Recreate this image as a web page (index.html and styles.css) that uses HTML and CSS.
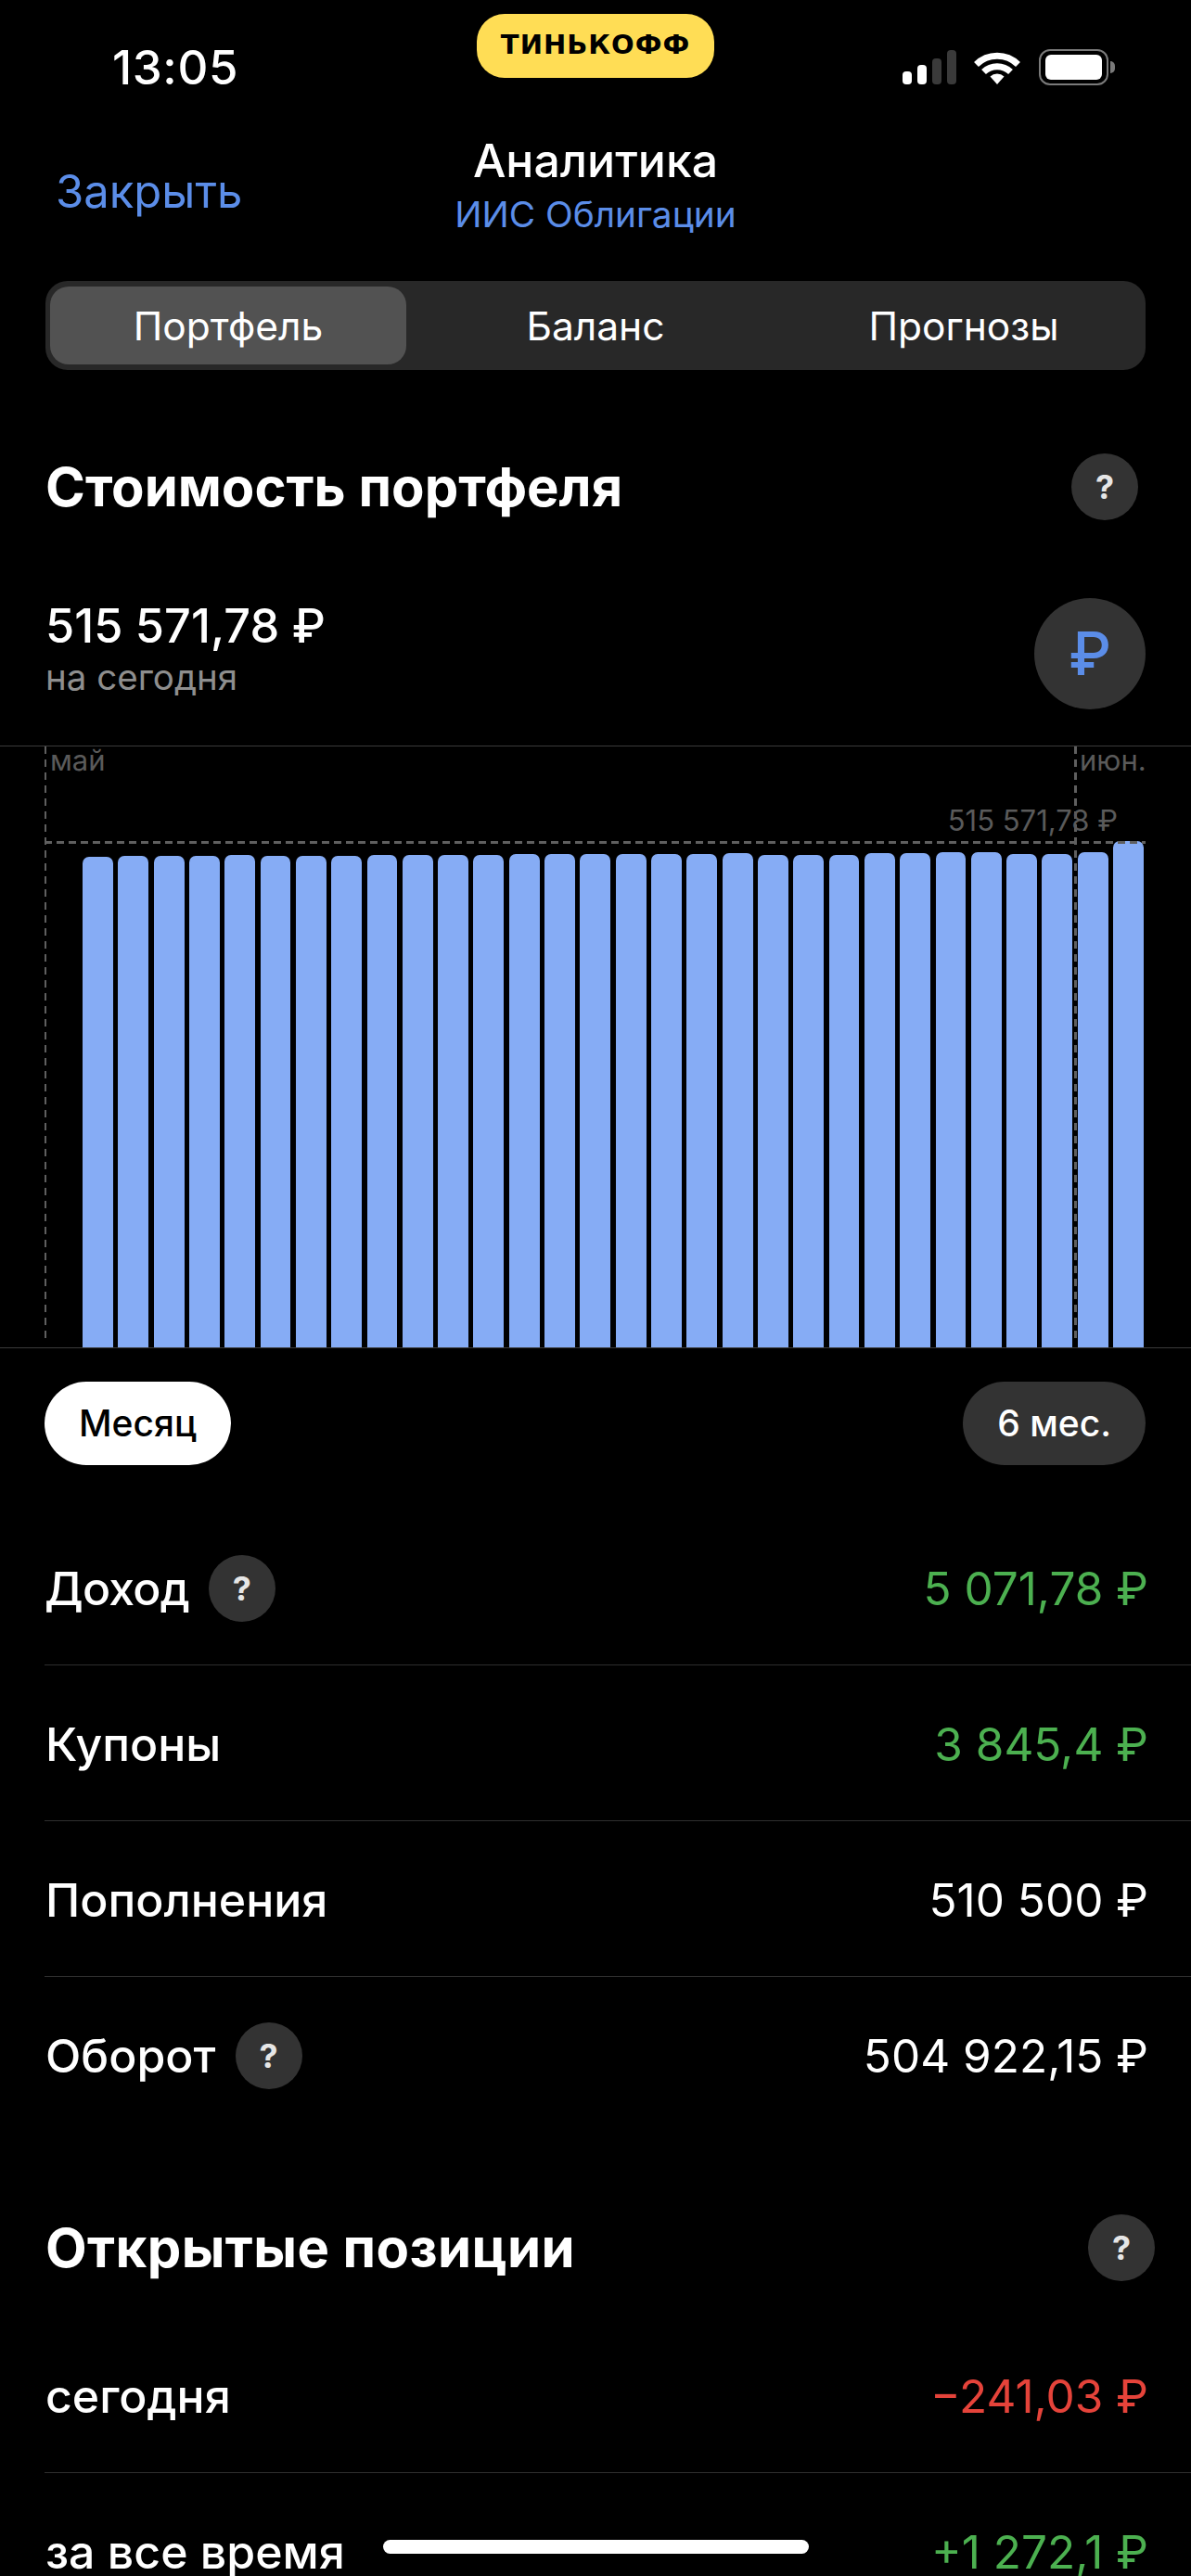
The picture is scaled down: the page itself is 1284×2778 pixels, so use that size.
FILE: index.html
```html
<!DOCTYPE html>
<html lang="ru">
<head>
  <meta charset="UTF-8">
  <title>Аналитика</title>
  <link rel="stylesheet" href="styles.css">
</head>
<body>
  <div class="status">
    <div class="time">13:05</div>
    <div class="brand">ТИНЬКОФФ</div>
    <div class="status-icons">
      <svg class="signal" width="58" height="37" viewBox="0 0 58 37">
        <rect x="0" y="23" width="10" height="14" rx="4" fill="#fff"/>
        <rect x="16" y="16" width="10" height="21" rx="4" fill="#fff"/>
        <rect x="32" y="9" width="10" height="28" rx="4" fill="#3a3a3a"/>
        <rect x="48" y="0" width="10" height="37" rx="4" fill="#3a3a3a"/>
      </svg>
      <svg class="wifi" width="50" height="37" viewBox="0 0 50 37">
        <path d="M2.5 15.5A32 32 0 0 1 47.500 15.500" fill="none" stroke="#fff" stroke-width="7"/>
        <path d="M10.500 23.500A21 21 0 0 1 39.500 23.500" fill="none" stroke="#fff" stroke-width="7"/>
        <path d="M25 37L17.500 28.500A11 11 0 0 1 32.500 28.500Z" fill="#fff"/>
      </svg>
      <div class="battery"><div class="battery-level"></div></div>
      <div class="battery-nub"></div>
    </div>
  </div>

  <div class="nav">
    <div class="nav-close">Закрыть</div>
    <div class="nav-title">
      <div class="nav-name">Аналитика</div>
      <div class="nav-sub">ИИС Облигации</div>
    </div>
  </div>

  <div class="tabs">
    <div class="tab tab-active">Портфель</div>
    <div class="tab">Баланс</div>
    <div class="tab">Прогнозы</div>
  </div>

  <div class="head head-first">
    <h2>Стоимость портфеля</h2>
    <div class="help">?</div>
  </div>

  <div class="amount">
    <div>
      <div class="amount-value">515 571,78 ₽</div>
      <div class="amount-note">на сегодня</div>
    </div>
    <div class="currency">₽</div>
  </div>

  <div class="chart">
    <div class="bars">
      <div class="bar" style="height:529px"></div>
      <div class="bar" style="height:530px"></div>
      <div class="bar" style="height:530px"></div>
      <div class="bar" style="height:530px"></div>
      <div class="bar" style="height:531px"></div>
      <div class="bar" style="height:530px"></div>
      <div class="bar" style="height:530px"></div>
      <div class="bar" style="height:530px"></div>
      <div class="bar" style="height:531px"></div>
      <div class="bar" style="height:531px"></div>
      <div class="bar" style="height:531px"></div>
      <div class="bar" style="height:531px"></div>
      <div class="bar" style="height:532px"></div>
      <div class="bar" style="height:532px"></div>
      <div class="bar" style="height:532px"></div>
      <div class="bar" style="height:532px"></div>
      <div class="bar" style="height:532px"></div>
      <div class="bar" style="height:532px"></div>
      <div class="bar" style="height:533px"></div>
      <div class="bar" style="height:531px"></div>
      <div class="bar" style="height:531px"></div>
      <div class="bar" style="height:531px"></div>
      <div class="bar" style="height:533px"></div>
      <div class="bar" style="height:533px"></div>
      <div class="bar" style="height:534px"></div>
      <div class="bar" style="height:534px"></div>
      <div class="bar" style="height:532px"></div>
      <div class="bar" style="height:532px"></div>
      <div class="bar" style="height:534px"></div>
      <div class="bar" style="height:546px"></div>
    </div>
    <div class="line-v line-may"></div>
    <div class="line-v line-jun"></div>
    <div class="line-h"></div>
    <div class="chart-label label-may">май</div>
    <div class="chart-label label-jun">июн.</div>
    <div class="chart-label label-sum">515 571,78 ₽</div>
  </div>

  <div class="periods">
    <div class="pill pill-active">Месяц</div>
    <div class="pill">6 мес.</div>
  </div>

  <div class="rows">
    <div class="row">
      <div class="row-name row-name-tight">Доход <span class="help">?</span></div>
      <div class="row-value green">5 071,78 ₽</div>
    </div>
    <div class="row">
      <div class="row-name">Купоны</div>
      <div class="row-value green">3 845,4 ₽</div>
    </div>
    <div class="row">
      <div class="row-name">Пополнения</div>
      <div class="row-value">510 500 ₽</div>
    </div>
    <div class="row row-last">
      <div class="row-name">Оборот <span class="help">?</span></div>
      <div class="row-value">504 922,15 ₽</div>
    </div>
  </div>

  <div class="head head-second">
    <h2>Открытые позиции</h2>
    <div class="help">?</div>
  </div>

  <div class="rows rows-open">
    <div class="row">
      <div class="row-name">сегодня</div>
      <div class="row-value red">−241,03 ₽</div>
    </div>
    <div class="row row-last">
      <div class="row-name">за все время</div>
      <div class="row-value green">+1 272,1 ₽</div>
    </div>
  </div>

  <div class="home-bar"></div>
</body>
</html>
```

FILE: styles.css
```css
html, body {
  margin: 0;
  height: 2778px;
  overflow: hidden;
  background: #000;
}

body {
  position: relative;
  color: #fff;
  font-family: Inter, "Noto Sans", sans-serif;
}

/* status bar */
.status {
  height: 130px;
  display: grid;
  grid-template-columns: 1fr 256px 1fr;
  box-sizing: border-box;
  padding: 15px 82px 0;
}

.time {
  margin: 33px 0 0 39px;
  font-size: 51px;
  line-height: 50px;
  font-weight: 500;
  letter-spacing: 0.6px;
}

.brand {
  height: 69px;
  line-height: 67px;
  border-radius: 30px;
  background: #ffdd55;
  color: #000;
  text-align: center;
  font-family: "DejaVu Sans", sans-serif;
  font-size: 29px;
  font-weight: 700;
  letter-spacing: 1px;
}

.status-icons {
  display: flex;
  justify-content: flex-end;
  align-items: center;
  height: 39px;
  margin-top: 38px;
}

.wifi {
  margin-left: 19px;
}

.battery {
  width: 75px;
  height: 39px;
  margin-left: 20px;
  padding: 4px 5px;
  box-sizing: border-box;
  border: 2px solid #7a7a7a;
  border-radius: 12px;
}

.battery-level {
  height: 100%;
  width: 100%;
  background: #fff;
  border-radius: 6px;
}

.battery-nub {
  width: 5px;
  height: 13px;
  margin-left: 2px;
  background: #7a7a7a;
  border-radius: 0 6px 6px 0;
}

/* nav */
.nav {
  height: 173px;
  box-sizing: border-box;
  padding: 14px 61px 0;
  position: relative;
  display: flex;
  justify-content: center;
}

.nav-close {
  position: absolute;
  left: 60px;
  top: 48px;
  font-size: 49px;
  line-height: 58px;
  color: #5b8de8;
}

.nav-title {
  text-align: center;
}

.nav-name {
  font-size: 50px;
  line-height: 58px;
  font-weight: 500;
}

.nav-sub {
  font-size: 38.8px;
  line-height: 58px;
  color: #5b8de8;
}

/* tabs */
.tabs {
  display: grid;
  grid-template-columns: 384px 408px 1fr;
  height: 96px;
  margin: 0 49px;
  padding: 6px 3px 6px 5px;
  box-sizing: border-box;
  background: #282828;
  border-radius: 24px;
}

.tab {
  display: flex;
  align-items: center;
  justify-content: center;
  font-size: 42.5px;
}

.tab-active {
  background: #525252;
  border-radius: 20px;
}

/* headers */
.head {
  display: flex;
  justify-content: space-between;
  align-items: center;
  height: 72px;
  padding-left: 49px;
}

.head h2 {
  margin: 0;
  font-size: 58px;
  font-weight: 700;
}

.head-first {
  margin-top: 90px;
  padding-right: 57px;
}

.head-second {
  margin-top: 88px;
  padding-right: 39px;
}

.head-second h2 {
  letter-spacing: 0.4px;
}

.help {
  display: inline-flex;
  align-items: center;
  justify-content: center;
  width: 72px;
  height: 72px;
  border-radius: 50%;
  background: #333;
  color: #e6e6e6;
  font-size: 36px;
  font-weight: 700;
  letter-spacing: 0;
}

/* amount */
.amount {
  display: flex;
  justify-content: space-between;
  align-items: center;
  height: 120px;
  margin-top: 84px;
  padding: 0 49px;
}

.amount-value {
  margin-top: -10px;
  font-size: 50.5px;
  line-height: 60px;
  font-weight: 500;
}

.amount-note {
  font-size: 38.5px;
  line-height: 50px;
  color: #8e8e8e;
}

.currency {
  width: 120px;
  height: 120px;
  line-height: 120px;
  border-radius: 50%;
  background: #333;
  color: #5b8de8;
  text-align: center;
  font-size: 64px;
  font-weight: 500;
}

/* chart */
.chart {
  position: relative;
  height: 650px;
  margin-top: 39px;
  box-sizing: border-box;
  border-top: 1px solid #3a3a3a;
  border-bottom: 1px solid #3a3a3a;
}

.bars {
  display: grid;
  grid-template-columns: repeat(30, 1fr);
  column-gap: 5.4px;
  align-items: end;
  height: 100%;
  padding: 0 51px 0 89px;
  box-sizing: border-box;
}

.bar {
  background: #86acf5;
  border-radius: 7px 7px 0 0;
}

.line-v {
  position: absolute;
  top: 0;
  bottom: 6px;
  background: repeating-linear-gradient(to bottom, #5f5f5f 0 8px, transparent 8px 14px);
}

.line-may {
  left: 48px;
  width: 2px;
}

.line-jun {
  left: 1158px;
  width: 3px;
}

.line-h {
  position: absolute;
  left: 48px;
  right: 49px;
  top: 102px;
  height: 3px;
  background: repeating-linear-gradient(to right, #5f5f5f 0 8px, transparent 8px 13px);
}

.chart-label {
  position: absolute;
  color: #5a5a5a;
  font-size: 31px;
  line-height: 36px;
}

.label-may {
  left: 54px;
  top: -3px;
}

.label-jun {
  left: 1164px;
  top: -3px;
}

.label-sum {
  right: 79px;
  top: 62px;
}

/* period */
.periods {
  display: flex;
  justify-content: space-between;
  margin: 36px 49px 0 48px;
}

.pill {
  height: 90px;
  line-height: 90px;
  padding: 0 37px;
  border-radius: 45px;
  background: #333;
  font-size: 39px;
  font-weight: 500;
}

.pill-active {
  background: #fff;
  color: #000;
}

/* rows */
.rows {
  margin: 48px 0 0 48px;
}

.rows-open {
  margin-top: 39px;
}

.row {
  display: flex;
  justify-content: space-between;
  align-items: center;
  height: 168px;
  box-sizing: border-box;
  padding: 2px 46px 0 1px;
  border-bottom: 1px solid #2e2e2e;
}

.row-last {
  border-bottom: 0;
}

.row-name {
  display: flex;
  align-items: center;
  gap: 21px;
  font-size: 50px;
  font-weight: 500;
}

.row-name-tight {
  letter-spacing: -0.8px;
  margin-left: -1px;
}

.row-value {
  font-size: 49.500px;
}

.green {
  color: #4cb050;
}

.red {
  color: #e5433a;
}

.home-bar {
  position: absolute;
  left: 413px;
  top: 2739px;
  width: 459px;
  height: 15px;
  border-radius: 8px;
  background: #fff;
}
```
